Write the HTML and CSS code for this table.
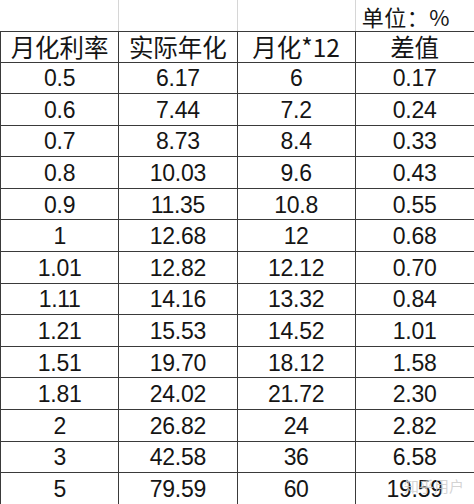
FILE: index.html
```html
<!DOCTYPE html>
<html lang="zh-CN">
<head>
<meta charset="utf-8">
<link rel="stylesheet" href="styles.css">
</head>
<body>
<div class="sheet">
<table class="grid">
<colgroup><col class="c"><col class="c"><col class="c"><col class="c"></colgroup>
<tr class="unit"><td></td><td></td><td></td><td class="unit-label">单位：%</td></tr>
<tr class="head"><td>月化利率</td><td>实际年化</td><td>月化*12</td><td>差值</td></tr>
<tr><td>0.5</td><td>6.17</td><td>6</td><td>0.17</td></tr>
<tr><td>0.6</td><td>7.44</td><td>7.2</td><td>0.24</td></tr>
<tr><td>0.7</td><td>8.73</td><td>8.4</td><td>0.33</td></tr>
<tr><td>0.8</td><td>10.03</td><td>9.6</td><td>0.43</td></tr>
<tr><td>0.9</td><td>11.35</td><td>10.8</td><td>0.55</td></tr>
<tr><td>1</td><td>12.68</td><td>12</td><td>0.68</td></tr>
<tr><td>1.01</td><td>12.82</td><td>12.12</td><td>0.70</td></tr>
<tr><td>1.11</td><td>14.16</td><td>13.32</td><td>0.84</td></tr>
<tr><td>1.21</td><td>15.53</td><td>14.52</td><td>1.01</td></tr>
<tr><td>1.51</td><td>19.70</td><td>18.12</td><td>1.58</td></tr>
<tr><td>1.81</td><td>24.02</td><td>21.72</td><td>2.30</td></tr>
<tr><td>2</td><td>26.82</td><td>24</td><td>2.82</td></tr>
<tr><td>3</td><td>42.58</td><td>36</td><td>6.58</td></tr>
<tr><td>5</td><td>79.59</td><td>60</td><td>19.59</td></tr>
</table>
<div class="watermark">知乎用户</div>
</div>
</body>
</html>
```
FILE: styles.css
```css
html, body {
  margin: 0;
  padding: 0;
  background: #ffffff;
}
.sheet {
  position: relative;
  width: 474px;
  height: 504px;
  overflow: hidden;
  font-family: "Liberation Sans", "Noto Sans CJK SC", sans-serif;
  color: #151515;
}
.grid {
  border-collapse: collapse;
  table-layout: fixed;
  width: 473px;
}
.grid .c {
  width: 118.25px;
}
.grid tr {
  height: 31.6px;
}
.grid td {
  border: 1.5px solid #3a3a3a;
  border-top: none;
  text-align: center;
  vertical-align: middle;
  padding: 1px 0 0 0;
  font-size: 23px;
  line-height: 26px;
  letter-spacing: -0.3px;
  white-space: nowrap;
}
.grid td:last-child {
  border-right: none;
}
.grid .unit {
  height: 31px;
}
.grid .unit td {
  border: none;
  border-right: 1px solid #d6d6d6;
  border-bottom: 1.5px solid #3a3a3a;
}
.grid .unit td:last-child {
  border-right: none;
}
.grid .unit .unit-label {
  text-align: left;
  padding: 1px 0 0 6px;
  font-family: "Noto Sans CJK SC", sans-serif;
  font-size: 22px;
  line-height: 26px;
  letter-spacing: 0.5px;
}
.grid .head {
  height: 31px;
}
.grid .head td {
  font-family: "Noto Sans CJK SC", sans-serif;
  font-size: 24.5px;
  letter-spacing: 0;
}
.watermark {
  position: absolute;
  left: 404px;
  top: 478px;
  font-family: "Noto Sans CJK SC", sans-serif;
  font-size: 15px;
  line-height: 16px;
  color: rgba(205, 205, 205, 0.85);
}
```
